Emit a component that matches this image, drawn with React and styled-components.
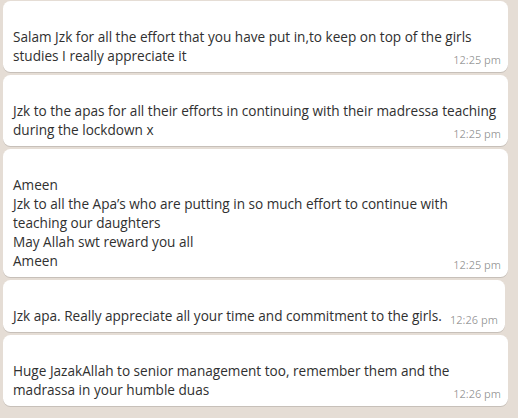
import React from "react";
import styled, { createGlobalStyle } from "styled-components";

const GlobalStyle = createGlobalStyle`
  html, body {
    margin: 0;
    padding: 0;
    background: #e5ddd5;
  }
  body {
    font-family: "Open Sans", "Noto Sans", sans-serif;
  }
`;

const Chat = styled.div`
  width: 518px;
  height: 418px;
  overflow: hidden;
  background: #e5ddd5;
  display: flex;
  flex-direction: column;
  align-items: flex-start;
  gap: 3px;
  padding: 1px 0 0 3px;
  box-sizing: border-box;
`;

const Bubble = styled.div`
  position: relative;
  box-sizing: border-box;
  width: ${p => (p.$wide ? "505px" : "auto")};
  background: #fff;
  border-radius: 7.5px;
  box-shadow: 0 1px 0.5px rgba(0, 0, 0, 0.13);
  padding: 26px 3px 7px 10px;
`;

const Text = styled.div`
  font-size: 13.6px;
  line-height: 19px;
  color: #303030;
  white-space: nowrap;
`;

const Spacer = styled.span`
  display: inline-block;
  width: 60px;
`;

const Time = styled.span`
  position: absolute;
  right: 7px;
  bottom: 5px;
  font-size: 11px;
  line-height: 15px;
  color: rgba(0, 0, 0, 0.42);
`;

const messages = [
  {
    lines: [
      "Salam Jzk for all the effort that you have put in,to keep on top of the girls",
      "studies I really appreciate it",
    ],
    time: "12:25 pm",
    wide: true,
  },
  {
    lines: [
      "Jzk to the apas for all their efforts in continuing with their madressa teaching",
      "during the lockdown x",
    ],
    time: "12:25 pm",
    wide: true,
  },
  {
    lines: [
      "Ameen",
      "Jzk to all the Apa’s who are putting in so much effort to continue with",
      "teaching our daughters",
      "May Allah swt reward you all",
      "Ameen",
    ],
    time: "12:25 pm",
    wide: true,
  },
  {
    lines: ["Jzk apa. Really appreciate all your time and commitment to the girls."],
    time: "12:26 pm",
    wide: false,
  },
  {
    lines: [
      "Huge JazakAllah to senior management too, remember them and the",
      "madrassa in your humble duas",
    ],
    time: "12:26 pm",
    wide: true,
  },
];

export default function App() {
  return (
    <>
      <GlobalStyle />
      <Chat>
        {messages.map((m, i) => (
          <Bubble key={i} $wide={m.wide}>
            <Text>
              {m.lines.map((l, j) => (
                <React.Fragment key={j}>
                  {j > 0 && <br />}
                  {l}
                </React.Fragment>
              ))}
              <Spacer />
            </Text>
            <Time>{m.time}</Time>
          </Bubble>
        ))}
      </Chat>
    </>
  );
}
